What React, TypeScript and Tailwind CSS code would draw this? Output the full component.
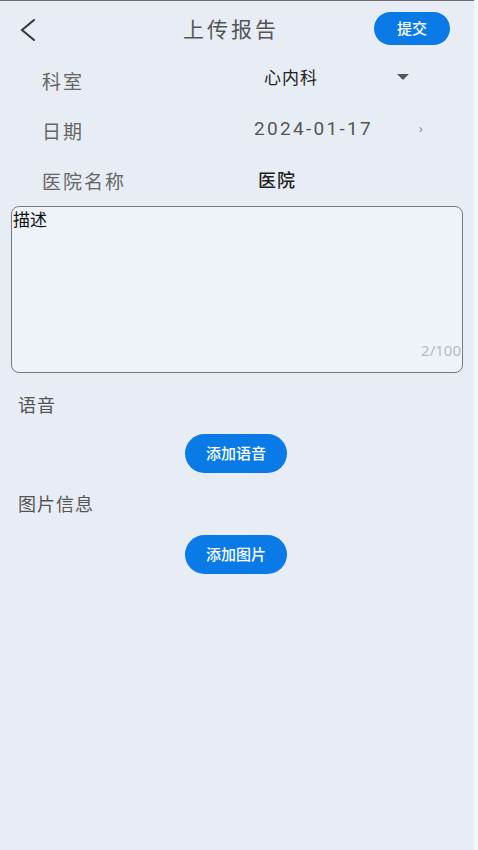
import { useState } from "react";

const rows = [
  { label: "科室", value: "心内科", kind: "select" },
  { label: "日期", value: "2024-01-17", kind: "date" },
  { label: "医院名称", value: "医院", kind: "text" },
];

export default function App() {
  const [desc] = useState("描述");

  return (
    <div
      className="flex w-[478px] h-[850px] bg-[#f2f5f9]"
      style={{ fontFamily: '"Noto Sans", "Noto Sans CJK SC", sans-serif' }}
    >
      <div className="flex flex-col w-[474px] h-full bg-[#e8edf5] border-t border-[#6f6f6f]">
        {/* header */}
        <div className="relative flex items-center justify-center h-[55px] pr-[12px]">
          <button className="absolute left-[18px] top-[16px] text-[#333]">
            <svg width="22" height="26" viewBox="0 0 22 26" fill="none">
              <path d="M16 3 L4 13 L16 23" stroke="#333" strokeWidth="2" strokeLinecap="round" />
            </svg>
          </button>
          <div className="text-[21px] text-[#555] tracking-[3px] mt-[2px]">上传报告</div>
          <button className="absolute right-[24px] top-[11px] w-[76px] h-[33px] rounded-full bg-[#0a7be6] text-white text-[15px] font-medium leading-none">
            提交
          </button>
        </div>

        {/* form rows */}
        <div className="flex flex-col">
          {rows.map((r) => (
            <div key={r.label} className="flex items-center h-[50px]">
              <div className="w-[212px] pl-[42px] text-[19px] text-[#666] tracking-[2px] mt-[2px]">{r.label}</div>
              {r.kind === "select" && (
                <div className="flex items-center -mt-[6px]">
                  <span className="ml-[52px] text-[17px] text-[#222] tracking-[1px]">{r.value}</span>
                  <span className="ml-[79px] -mt-[2px] w-0 h-0 border-l-[6px] border-r-[6px] border-t-[6px] border-l-transparent border-r-transparent border-t-[#555]" />
                </div>
              )}
              {r.kind === "date" && (
                <div className="flex items-center -mt-[4px]">
                  <span
                    className="ml-[42px] text-[19px] text-[#555] tracking-[2.3px]"
                    style={{ fontFamily: "Roboto, sans-serif" }}
                  >
                    {r.value}
                  </span>
                  <span className="ml-[46px] text-[12px] text-[#888]">›</span>
                </div>
              )}
              {r.kind === "text" && (
                <span className="ml-[46px] -mt-[2px] text-[18px] font-medium text-[#222] tracking-[1px]">{r.value}</span>
              )}
            </div>
          ))}
        </div>

        {/* description */}
        <div className="relative mx-[11px] h-[167px] rounded-[8px] border border-[#7a7a7a] bg-[#eef2f9]">
          <div className="pl-[1px] pt-[2px] text-[17px] text-[#111] leading-[22px]">{desc}</div>
          <div className="absolute right-[1px] bottom-[11px] text-[15px] text-[#bbb]">
            {desc.length}/100
          </div>
        </div>

        {/* voice */}
        <div className="mt-[19px] pl-[18px] text-[18px] text-[#555] tracking-[1px] leading-[26px]">语音</div>
        <div className="flex justify-center mt-[16px] pr-[2px]">
          <button className="w-[102px] h-[39px] rounded-full bg-[#0a7be6] text-white text-[15px] font-medium">
            添加语音
          </button>
        </div>

        {/* pictures */}
        <div className="mt-[18px] pl-[18px] text-[18px] text-[#555] tracking-[1px] leading-[26px]">图片信息</div>
        <div className="flex justify-center mt-[18px] pr-[2px]">
          <button className="w-[102px] h-[39px] rounded-full bg-[#0a7be6] text-white text-[15px] font-medium">
            添加图片
          </button>
        </div>
      </div>
    </div>
  );
}
